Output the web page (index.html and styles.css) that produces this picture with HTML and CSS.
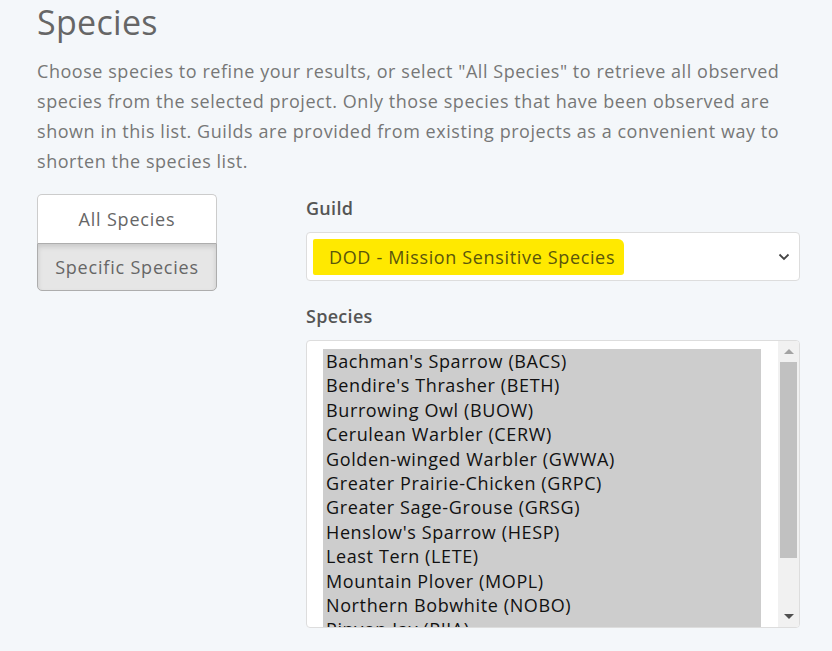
FILE: index.html
```html
<!DOCTYPE html>
<html lang="en">
<head>
<meta charset="utf-8">
<title>Species</title>
<link rel="stylesheet" href="styles.css">
</head>
<body>
<main class="page">
  <h1 class="title">Species</h1>
  <p class="intro">Choose species to refine your results, or select "All Species" to retrieve all observed species from the selected project. Only those species that have been observed are shown in this list. Guilds are provided from existing projects as a convenient way to shorten the species list.</p>
  <div class="row">
    <div class="btn-group">
      <button class="btn">All Species</button>
      <button class="btn active">Specific Species</button>
    </div>
    <div class="form">
      <label class="label">Guild</label>
      <div class="select">
        <span class="hl">DOD - Mission Sensitive Species</span>
        <svg class="chev" width="12" height="8" viewBox="0 0 12 8"><path d="M1.5 1.5 L6 6 L10.5 1.5" fill="none" stroke="#444" stroke-width="1.8"/></svg>
      </div>
      <label class="label label-species">Species</label>
      <div class="listbox">
        <div class="options">
          <div class="opt">Bachman's Sparrow (BACS)</div>
          <div class="opt">Bendire's Thrasher (BETH)</div>
          <div class="opt">Burrowing Owl (BUOW)</div>
          <div class="opt">Cerulean Warbler (CERW)</div>
          <div class="opt">Golden-winged Warbler (GWWA)</div>
          <div class="opt">Greater Prairie-Chicken (GRPC)</div>
          <div class="opt">Greater Sage-Grouse (GRSG)</div>
          <div class="opt">Henslow's Sparrow (HESP)</div>
          <div class="opt">Least Tern (LETE)</div>
          <div class="opt">Mountain Plover (MOPL)</div>
          <div class="opt">Northern Bobwhite (NOBO)</div>
          <div class="opt">Pinyon Jay (PIJA)</div>
        </div>
        <div class="scrollbar">
          <span class="arrow up"></span>
          <span class="thumb"></span>
          <span class="track"></span>
          <span class="arrow down"></span>
        </div>
      </div>
    </div>
  </div>
</main>
</body>
</html>
```

FILE: styles.css
```css
html, body {
  margin: 0;
  padding: 0;
  background: #f4f7fa;
}
body {
  font-family: "Open Sans", "Liberation Sans", sans-serif;
  color: #666;
}
.page {
  padding: 2px 32px 0 37px;
}
.title {
  margin: 0;
  font-size: 34px;
  font-weight: 400;
  line-height: 40px;
  color: #666;
  letter-spacing: 0.3px;
}
.intro {
  margin: 14px 0 0;
  font-size: 18px;
  line-height: 30px;
  color: #777;
  letter-spacing: 0.55px;
}
.row {
  display: flex;
  gap: 89px;
  margin-top: 18px;
}
.btn-group {
  width: 180px;
  display: flex;
  flex-direction: column;
  flex: none;
  align-self: flex-start;
}
.btn {
  font-family: inherit;
  font-size: 18px;
  letter-spacing: 0.8px;
  color: #666;
  height: 48.5px;
  border: 1px solid #ccc;
  background: #fff;
  margin: 0;
  padding: 0;
}
.btn:first-child {
  border-radius: 5px 5px 0 0;
  border-bottom: 0;
}
.btn.active {
  background: #e6e6e6;
  border-color: #adadad;
  border-radius: 0 0 5px 5px;
  box-shadow: inset 0 3px 5px rgba(0,0,0,0.125);
}
.form {
  flex: 1;
  display: flex;
  flex-direction: column;
}
.label {
  font-size: 18px;
  font-weight: 600;
  line-height: 28px;
  color: #555;
  margin-bottom: 10px;
  letter-spacing: 0.3px;
}
.label-species {
  margin-top: 21px;
}
.select {
  height: 47px;
  border: 1px solid #ddd;
  border-radius: 4px;
  background: #fff;
  display: flex;
  align-items: center;
  justify-content: space-between;
  padding: 0 9px 0 6px;
}
.hl {
  background: #ffe900;
  color: #5a560c;
  font-size: 18px;
  letter-spacing: 0.65px;
  line-height: 36px;
  padding: 0 9px 0 16px;
  border-radius: 2px 6px 3px 2px;
}
.listbox {
  height: 286px;
  border: 1px solid #ddd;
  border-radius: 4px;
  background: #fff;
  display: flex;
  overflow: hidden;
}
.options {
  flex: 1;
  padding: 8px 17px 0 16px;
  overflow: hidden;
}
.opt {
  background: #cdcdcd;
  color: #111;
  font-size: 18px;
  letter-spacing: 0.62px;
  line-height: 24.4px;
  padding-left: 3px;
  white-space: nowrap;
}
.scrollbar {
  width: 21px;
  background: #f1f1f1;
  display: flex;
  flex-direction: column;
  align-items: center;
}
.arrow {
  width: 0;
  height: 0;
  border-left: 5px solid transparent;
  border-right: 5px solid transparent;
}
.arrow.up {
  margin-top: 8px;
  border-bottom: 5px solid #a3a3a3;
}
.thumb {
  margin-top: 8px;
  width: 17px;
  height: 196px;
  background: #c1c1c1;
}
.track {
  flex: 1;
}
.arrow.down {
  margin-bottom: 8px;
  border-top: 5px solid #505050;
}
```
